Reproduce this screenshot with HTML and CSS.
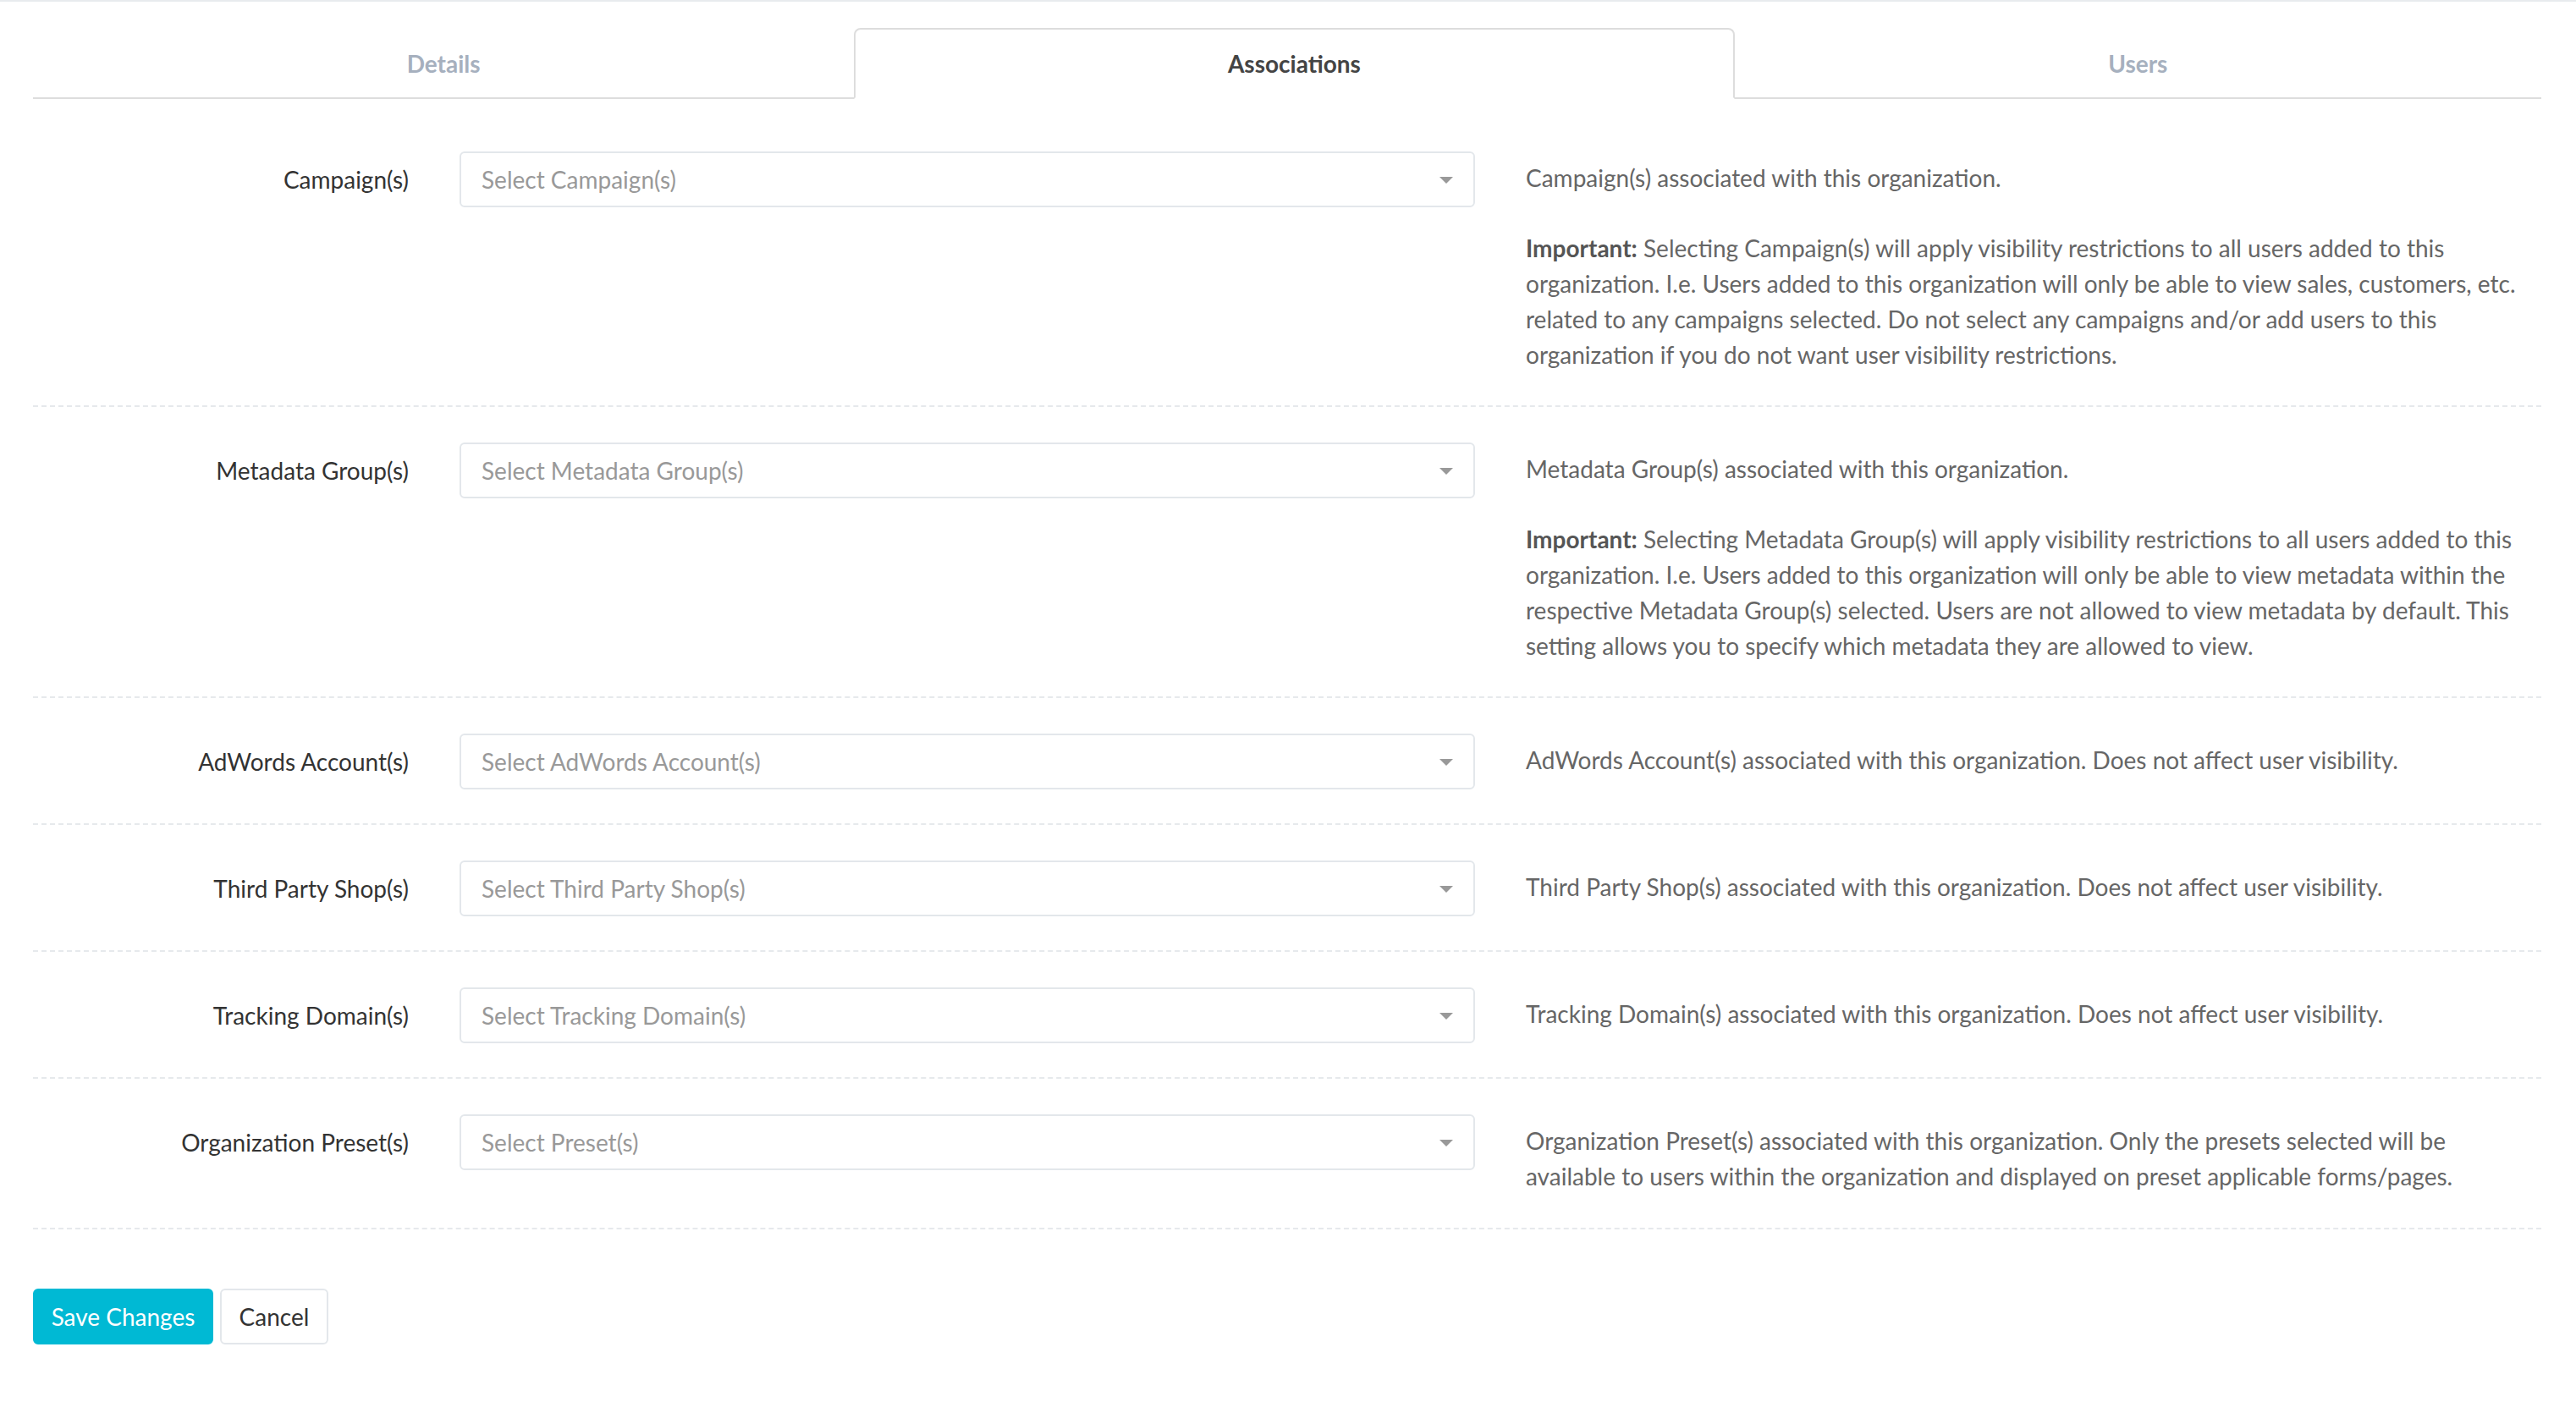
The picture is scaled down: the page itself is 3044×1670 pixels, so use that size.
FILE: index.html
```html
<!DOCTYPE html>
<html>

<head>
  <title>Organization - Associations</title>
  <link rel="stylesheet" href="styles.css">
</head>

<body>
  <div class="container">
    <ul class="nav-tabs">
      <li><a href="#">Details</a></li>
      <li class="active"><a href="#">Associations</a></li>
      <li><a href="#">Users</a></li>
    </ul>

    <form class="assoc-form">
      <div class="form-row">
        <label class="form-label">Campaign(s)</label>
        <div class="select-box">
          <span class="placeholder">Select Campaign(s)</span>
          <span class="caret"></span>
        </div>
        <div class="help">
          <p>Campaign(s) associated with this organization.</p>
          <p><strong>Important:</strong> Selecting Campaign(s) will apply visibility restrictions to all users added to this organization. I.e. Users added to this organization will only be able to view sales, customers, etc. related to any campaigns selected. Do not select any campaigns and/or add users to this organization if you do not want user visibility restrictions.</p>
        </div>
      </div>

      <div class="form-row">
        <label class="form-label">Metadata Group(s)</label>
        <div class="select-box">
          <span class="placeholder">Select Metadata Group(s)</span>
          <span class="caret"></span>
        </div>
        <div class="help">
          <p>Metadata Group(s) associated with this organization.</p>
          <p><strong>Important:</strong> Selecting Metadata Group(s) will apply visibility restrictions to all users added to this organization. I.e. Users added to this organization will only be able to view metadata within the respective Metadata Group(s) selected. Users are not allowed to view metadata by default. This setting allows you to specify which metadata they are allowed to view.</p>
        </div>
      </div>

      <div class="form-row">
        <label class="form-label">AdWords Account(s)</label>
        <div class="select-box">
          <span class="placeholder">Select AdWords Account(s)</span>
          <span class="caret"></span>
        </div>
        <div class="help">
          <p>AdWords Account(s) associated with this organization. Does not affect user visibility.</p>
        </div>
      </div>

      <div class="form-row">
        <label class="form-label">Third Party Shop(s)</label>
        <div class="select-box">
          <span class="placeholder">Select Third Party Shop(s)</span>
          <span class="caret"></span>
        </div>
        <div class="help">
          <p>Third Party Shop(s) associated with this organization. Does not affect user visibility.</p>
        </div>
      </div>

      <div class="form-row">
        <label class="form-label">Tracking Domain(s)</label>
        <div class="select-box">
          <span class="placeholder">Select Tracking Domain(s)</span>
          <span class="caret"></span>
        </div>
        <div class="help">
          <p>Tracking Domain(s) associated with this organization. Does not affect user visibility.</p>
        </div>
      </div>

      <div class="form-row">
        <label class="form-label">Organization Preset(s)</label>
        <div class="select-box">
          <span class="placeholder">Select Preset(s)</span>
          <span class="caret"></span>
        </div>
        <div class="help">
          <p>Organization Preset(s) associated with this organization. Only the presets selected will be available to users within the organization and displayed on preset applicable forms/pages.</p>
        </div>
      </div>

      <div class="form-actions">
        <button type="button" class="btn btn-primary">Save Changes</button>
        <button type="button" class="btn btn-default">Cancel</button>
      </div>
    </form>
  </div>
</body>

</html>
```

FILE: styles.css
```css
body {
  font-family: Lato, "Open Sans", sans-serif;
  font-size: 28px;
  margin: 0;
  padding: 0;
  color: #333;
  background-color: #fff;
  border-top: 2px solid #e8ebee;
}

.container {
  padding: 0 41px 0 39px;
}

/* tabs */

.nav-tabs {
  display: flex;
  list-style-type: none;
  margin: 31px 0 0;
  padding: 0;
  border-bottom: 2px solid #dddddd;
}

.nav-tabs li {
  flex: 1 1 auto;
  margin-bottom: -2px;
}

.nav-tabs a {
  display: block;
  height: 84px;
  line-height: 80px;
  text-align: center;
  text-decoration: none;
  font-weight: 700;
  color: #a6b0be;
  border: 2px solid transparent;
  border-radius: 8px 8px 0 0;
  box-sizing: border-box;
}

.nav-tabs li.active a {
  color: #444;
  background-color: #fff;
  border-color: #dddddd;
  border-bottom-color: #fff;
}

/* form rows */

.assoc-form {
  margin-top: 20px;
}

.form-row {
  display: grid;
  grid-template-columns: 444px 1200px 1200px;
  column-gap: 60px;
  align-items: start;
  padding: 42px 0 39px;
  border-bottom: 2px dashed #e6e9ec;
}

.form-row:nth-child(n+3) {
  padding-bottom: 40px;
}

.form-label {
  text-align: right;
  line-height: 66px;
  color: #333;
}

.select-box {
  position: relative;
  height: 66px;
  border: 2px solid #e3e7eb;
  border-radius: 6px;
  box-sizing: border-box;
  padding-left: 24px;
  line-height: 62px;
}

.placeholder {
  color: #999;
}

.caret {
  position: absolute;
  right: 24px;
  top: 28px;
  width: 0;
  height: 0;
  border-left: 8px solid transparent;
  border-right: 8px solid transparent;
  border-top: 8px solid #999;
}

.help {
  padding-top: 10px;
  color: #666;
  line-height: 42px;
}

.help p {
  margin: 0 0 41px;
}

.help p:last-child {
  margin-bottom: 0;
}

.help strong {
  color: #555;
}

/* buttons */

.form-actions {
  display: flex;
  gap: 8px;
  margin-top: 70px;
}

.btn {
  height: 66px;
  padding: 0;
  font-family: inherit;
  font-size: 28px;
  white-space: nowrap;
  border-radius: 6px;
  cursor: pointer;
}

.btn-primary {
  width: 213px;
  color: #fff;
  background-color: #00b9d4;
  border: 2px solid #00b9d4;
}

.btn-default {
  width: 128px;
  color: #333;
  background-color: #fff;
  border: 2px solid #e3e7eb;
}
```
